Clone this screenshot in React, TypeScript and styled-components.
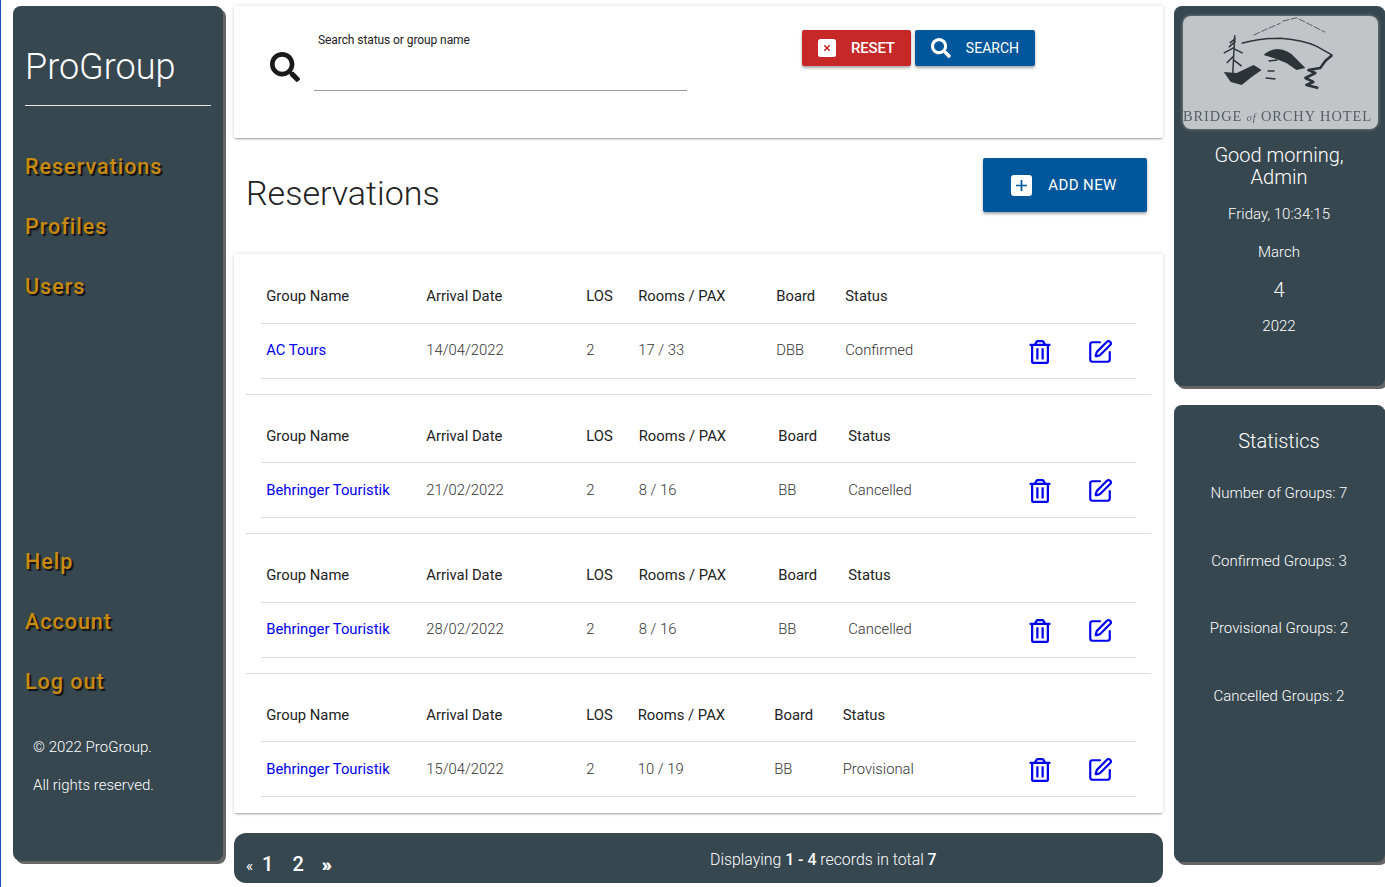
import React from 'react';
import styled, { createGlobalStyle } from 'styled-components';
import { FaRegTrashAlt, FaSearch } from 'react-icons/fa';
import { SquarePen } from 'lucide-react';

const reservations = [
  { name: 'AC Tours', arrival: '14/04/2022', los: 2, rooms: '17 / 33', board: 'DBB', status: 'Confirmed', columns: '160px 160px 52px 138px 69px 1fr 59px 49px' },
  { name: 'Behringer Touristik', arrival: '21/02/2022', los: 2, rooms: '8 / 16', board: 'BB', status: 'Cancelled', columns: '160px 160px 52.5px 139.5px 70px 1fr 59px 49px' },
  { name: 'Behringer Touristik', arrival: '28/02/2022', los: 2, rooms: '8 / 16', board: 'BB', status: 'Cancelled', columns: '160px 160px 52.5px 139.5px 70px 1fr 59px 49px' },
  { name: 'Behringer Touristik', arrival: '15/04/2022', los: 2, rooms: '10 / 19', board: 'BB', status: 'Provisional', columns: '160px 160px 51.5px 136.5px 68.5px 1fr 59px 49px' },
];

const statistics = ['Number of Groups: 7', 'Confirmed Groups: 3', 'Provisional Groups: 2', 'Cancelled Groups: 2'];

const CloseGlyph = () => (
  <svg width="18" height="18" viewBox="0 0 18 18">
    <rect width="18" height="18" rx="2.5" fill="#fff" />
    <path d="M6.3 6.3 L11.7 11.7 M11.7 6.3 L6.3 11.7" stroke="#c62828" strokeWidth="1.6" />
  </svg>
);

const PlusGlyph = () => (
  <svg width="21" height="21" viewBox="0 0 21 21">
    <rect width="21" height="21" rx="3" fill="#fff" />
    <path d="M10.5 5 V16 M5 10.5 H16" stroke="#01579b" strokeWidth="1.7" />
  </svg>
);

export default function App() {
  return (
    <>
      <GlobalStyle />
      <Page>
        <Sidebar>
          <Brand>ProGroup</Brand>
          <NavGroup>
            <NavLink>Reservations</NavLink>
            <NavLink>Profiles</NavLink>
            <NavLink>Users</NavLink>
          </NavGroup>
          <SidebarBottom>
            <NavGroup>
              <NavLink>Help</NavLink>
              <NavLink>Account</NavLink>
              <NavLink>Log out</NavLink>
            </NavGroup>
            <Copyright>
              <p>© 2022 ProGroup.</p>
              <p>All rights reserved.</p>
            </Copyright>
          </SidebarBottom>
        </Sidebar>

        <Main>
          <SearchCard>
            <SearchIcon />
            <SearchField>
              <SearchLabel>Search status or group name</SearchLabel>
            </SearchField>
            <SearchActions>
              <ActionButton $color="#c62828" $strong>
                <CloseGlyph />
                RESET
              </ActionButton>
              <ActionButton $color="#01579b">
                <FaSearch size={20} />
                SEARCH
              </ActionButton>
            </SearchActions>
          </SearchCard>

          <TitleBar>
            <Title>Reservations</Title>
            <AddButton>
              <PlusGlyph />
              ADD NEW
            </AddButton>
          </TitleBar>

          <ListCard>
            {reservations.map((item, i) => (
              <Reservation key={i}>
                <HeaderRow $columns={item.columns}>
                  <span>Group Name</span>
                  <span>Arrival Date</span>
                  <span>LOS</span>
                  <span>Rooms / PAX</span>
                  <span>Board</span>
                  <span>Status</span>
                </HeaderRow>
                <DataRow $columns={item.columns}>
                  <GroupLink>{item.name}</GroupLink>
                  <span>{item.arrival}</span>
                  <span>{item.los}</span>
                  <span>{item.rooms}</span>
                  <span>{item.board}</span>
                  <span>{item.status}</span>
                  <IconCell><FaRegTrashAlt size={24} /></IconCell>
                  <IconCell><SquarePen size={26} strokeWidth={2} /></IconCell>
                </DataRow>
              </Reservation>
            ))}
          </ListCard>

          <Pagination>
            <Pages>
              <Arrow>«</Arrow>
              <PageNumber>1</PageNumber>
              <PageNumber>2</PageNumber>
              <Arrow $strong>»</Arrow>
            </Pages>
            <Summary>
              Displaying <b>1 - 4</b> records in total <b>7</b>
            </Summary>
          </Pagination>
        </Main>

        <RightColumn>
          <WelcomePanel>
            <Logo viewBox="0 0 196 113" aria-label="Bridge of Orchy Hotel">
              <path d="M71 19 L86 12 L98 7 M100 5 L114 1.5 L127 8 L143 16" fill="none" stroke="#4b5458" strokeWidth="0.9" strokeDasharray="7 1.5" />
              <path d="M59 27 Q80 22 98 22 Q122 24 134 30 L150 39" fill="none" stroke="#2c3438" strokeWidth="1.5" />
              <path d="M150 39 L143 45 L138 52 L126 54 L133 57 L123 62 L131 66 L124 69 L136 72" fill="none" stroke="#2c3438" strokeWidth="2.6" strokeLinejoin="round" />
              <path d="M81 39 Q87 33 95 33 Q106 34 112 41 L123 52 L114 54 L104 47 L91 42 Z" fill="#2c3438" />
              <path d="M52 19 L50 58 M53 22 L47 27 M53 25 L46 31 M52 31 L41 37 M52 33 L60 37 M51 40 L44 47 M51 44 L59 50" fill="none" stroke="#2c3438" strokeWidth="1.5" />
              <path d="M41 56 L54 57 L71 49 L79 54 L69 61 L59 69 L48 66 Z" fill="#2c3438" />
              <path d="M86 45 L95 44 M85 55 L92 55 M83 62 L93 63" fill="none" stroke="#2c3438" strokeWidth="1.4" />
              <LogoText x="0" y="105" textLength="189" lengthAdjust="spacing">
                BRIDGE <tspan fontStyle="italic" fontSize="10">of</tspan> ORCHY HOTEL
              </LogoText>
            </Logo>
            <Greeting>Good morning,<br />Admin</Greeting>
            <DateLine>Friday, 10:34:15</DateLine>
            <DateLine>March</DateLine>
            <DayNumber>4</DayNumber>
            <DateLine>2022</DateLine>
          </WelcomePanel>
          <StatsPanel>
            <StatsTitle>Statistics</StatsTitle>
            {statistics.map((s) => (
              <StatLine key={s}>{s}</StatLine>
            ))}
          </StatsPanel>
        </RightColumn>
      </Page>
    </>
  );
}

const GlobalStyle = createGlobalStyle`
  html, body {
    margin: 0;
    height: 100%;
    overflow: hidden;
    background: #fff;
    font-family: Roboto, "Liberation Sans", sans-serif;
  }
  p { margin: 0; }
`;

const Page = styled.div`
  height: 887px;
  box-sizing: border-box;
  border-left: 1px solid #1a4fb5;
  padding: 6px 0 0 12px;
  display: grid;
  grid-template-columns: 210px 940px 222px;
  justify-content: start;
`;

const Panel = styled.div`
  background: #37474f;
  border-radius: 8px;
  box-shadow: 3px 3px 0 #666;
  color: #fff;
  box-sizing: border-box;
`;

const Sidebar = styled(Panel)`
  height: 855px;
  padding: 0 12px;
  display: flex;
  flex-direction: column;
`;

const Brand = styled.div`
  height: 100px;
  box-sizing: border-box;
  padding-top: 39px;
  font-size: 36px;
  font-weight: 300;
  line-height: 44px;
  border-bottom: 1px solid #e8e8e8;
`;

const NavGroup = styled.nav`
  display: flex;
  flex-direction: column;
  gap: 34px;
  margin-top: 48px;
`;

const NavLink = styled.a`
  height: 26px;
  line-height: 26px;
  font-size: 21.5px;
  font-weight: 500;
  letter-spacing: 1px;
  color: #c98a10;
  text-shadow: 2px 2px 1px #111;
`;

const SidebarBottom = styled.div`
  margin-top: 201px;
`;

const Copyright = styled.div`
  margin-left: 8px;
  padding-top: 43px;
  display: flex;
  flex-direction: column;
  gap: 20px;
  font-size: 15px;
  font-weight: 300;
  line-height: 18px;
`;

const Main = styled.main`
  margin-left: 11px;
  width: 929px;
  display: flex;
  flex-direction: column;
`;

const Card = styled.div`
  background: #fff;
  border-radius: 2px;
  box-shadow: 0 2px 2px -1px rgba(0, 0, 0, 0.32), 0 0 4px rgba(0, 0, 0, 0.16);
`;

const SearchCard = styled(Card)`
  height: 132px;
  display: flex;
  align-items: flex-start;
`;

const SearchIcon = styled(FaSearch)`
  width: 30px;
  height: 30px;
  margin: 46px 0 0 36px;
  color: #1a1a1a;
`;

const SearchField = styled.div`
  width: 373px;
  height: 85px;
  margin-left: 14px;
  box-sizing: border-box;
  padding: 27px 0 0 4px;
  border-bottom: 1px solid #999;
`;

const SearchLabel = styled.label`
  display: block;
  font-size: 12px;
  line-height: 14px;
  letter-spacing: -0.08px;
  color: #222;
`;

const SearchActions = styled.div`
  display: flex;
  gap: 4px;
  margin: 24px 0 0 115px;
`;

const ActionButton = styled.button<{ $color: string; $strong?: boolean }>`
  width: ${(p) => (p.$strong ? '109px' : '120px')};
  height: 36px;
  display: flex;
  align-items: center;
  gap: 15px;
  padding: 0 16px;
  border: none;
  border-radius: 2px;
  background: ${(p) => p.$color};
  color: #fff;
  font-family: inherit;
  font-size: ${(p) => (p.$strong ? '15px' : '14px')};
  font-weight: ${(p) => (p.$strong ? 500 : 400)};
  letter-spacing: ${(p) => (p.$strong ? '-0.2px' : '0')};
  box-shadow: 0 2px 3px rgba(0, 0, 0, 0.35);
`;

const TitleBar = styled.div`
  height: 116px;
  box-sizing: border-box;
  padding: 20px 16px 0 12px;
  display: flex;
  justify-content: space-between;
  align-items: flex-start;
`;

const Title = styled.h1`
  margin: 13px 0 0;
  font-size: 34px;
  line-height: 44px;
  font-weight: 300;
  color: #222;
`;

const AddButton = styled.button`
  width: 164px;
  height: 54px;
  padding: 0 2px 0 0;
  display: flex;
  align-items: center;
  justify-content: center;
  gap: 16px;
  border: none;
  border-radius: 2px;
  background: #01579b;
  color: #fff;
  font-family: inherit;
  font-size: 15px;
  letter-spacing: 0.4px;
  box-shadow: 0 2px 3px rgba(0, 0, 0, 0.35);
`;

const ListCard = styled(Card)`
  height: 559px;
  box-sizing: border-box;
  padding: 14.75px 12px 0;
`;

const Reservation = styled.section`
  padding: 0 15px 15px;
  &:not(:last-child) {
    border-bottom: 1px solid #ddd;
    margin-bottom: 13.5px;
  }
`;

const Row = styled.div<{ $columns: string }>`
  display: grid;
  grid-template-columns: ${(p) => p.$columns};
  align-items: center;
  padding-left: 5.25px;
  border-bottom: 1px solid #ddd;
  font-size: 14.8px;
`;

const HeaderRow = styled(Row)`
  height: 53.5px;
  padding-top: 0.5px;
  color: #222;
`;

const DataRow = styled(Row)`
  height: 52.5px;
  padding-bottom: 1.5px;
  font-weight: 300;
  color: #333;
`;

const GroupLink = styled.a`
  color: #0000ee;
  font-weight: 400;
`;

const IconCell = styled.span`
  display: flex;
  margin-top: 3px;
  color: #0000ee;
`;

const Pagination = styled.footer`
  margin-top: 20px;
  height: 50px;
  border-radius: 12px;
  background: #37474f;
  color: #fff;
  display: flex;
  align-items: flex-end;
`;

const Pages = styled.div`
  display: flex;
  align-items: baseline;
  padding: 0 0 7px 12px;
  width: 464px;
  box-sizing: border-box;
`;

const Arrow = styled.span<{ $strong?: boolean }>`
  font-size: ${(p) => (p.$strong ? '19px' : '15px')};
  font-weight: ${(p) => (p.$strong ? 900 : 400)};
  margin-left: ${(p) => (p.$strong ? '8px' : '0')};
  text-shadow: ${(p) => (p.$strong ? '0.5px 0 0 #fff' : 'none')};
`;

const PageNumber = styled.span`
  font-size: 20px;
  font-weight: 500;
  margin: 0 10px 0 9px;
  line-height: 24px;
`;

const Summary = styled.div`
  font-size: 15.85px;
  font-weight: 300;
  line-height: 20px;
  padding-bottom: 13px;
  margin-left: 12px;
  b { font-weight: 500; }
`;

const RightColumn = styled.aside`
  margin-left: 11px;
  width: 211px;
  display: flex;
  flex-direction: column;
  gap: 19px;
`;

const WelcomePanel = styled(Panel)`
  height: 380px;
  padding: 10px 1px 0 0;
  display: flex;
  flex-direction: column;
  align-items: center;
  text-align: center;
`;

const Logo = styled.svg`
  width: 195px;
  height: 113px;
  margin-left: 3px;
  background: #c1c5c8;
  border-radius: 8px;
  filter: blur(0.35px);
  box-shadow: 0 0 3px 1px rgba(193, 197, 200, 0.35);
`;

const LogoText = styled.text`
  font-family: "Liberation Serif", serif;
  font-size: 14.5px;
  fill: #545d61;
`;

const Greeting = styled.div`
  margin-top: 15px;
  font-size: 20px;
  font-weight: 300;
  line-height: 22px;
`;

const DateLine = styled.p`
  margin-top: 17px;
  margin-bottom: 3px;
  font-size: 15px;
  font-weight: 300;
  line-height: 18px;
`;

const DayNumber = styled.div`
  margin-top: 16px;
  font-size: 20px;
  font-weight: 300;
  line-height: 20px;
`;

const StatsPanel = styled(Panel)`
  height: 457px;
  padding: 24px 1px 0 0;
  text-align: center;
`;

const StatsTitle = styled.div`
  font-size: 20px;
  font-weight: 300;
  line-height: 24px;
  margin-bottom: 30px;
`;

const StatLine = styled.p`
  height: 67.7px;
  font-size: 15px;
  font-weight: 300;
  line-height: 20px;
`;
